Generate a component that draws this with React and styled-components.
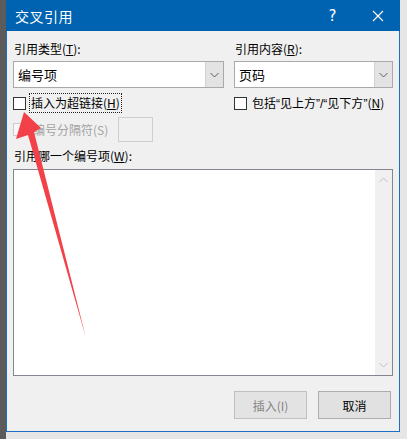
import React from 'react';
import styled, { createGlobalStyle } from 'styled-components';

const GlobalStyle = createGlobalStyle`
  html, body {
    margin: 0;
    padding: 0;
    background: #e4e4e4;
    font-family: "Noto Sans CJK SC", "Microsoft YaHei", sans-serif;
    font-size: 12px;
  }
`;

// screenshot backdrop: dark strip on the left, light shadow right and below
const Page = styled.div`
  position: relative;
  width: 407px;
  height: 439px;
  display: flex;
  align-items: flex-start;
  background: linear-gradient(to right, #5b5b5b 0, #5b5b5b 6px, #e6e6e6 6px);
  overflow: hidden;
`;

const Dialog = styled.div`
  margin-left: 6px;
  width: 394px;
  height: 432px;
  box-sizing: border-box;
  border: 1px solid #1c6ec2;
  border-top: none;
  background: #f0f0f0;
  display: flex;
  flex-direction: column;
`;

const TitleBar = styled.div`
  height: 31px;
  margin: 0 -1px;
  background: #0063b1;
  color: #fff;
  display: flex;
  align-items: center;
  padding-left: 9px;
  font-size: 14px;
`;

const Title = styled.div`
  flex: 1;
  letter-spacing: 0.5px;
`;

const TitleButton = styled.div`
  width: 45px;
  height: 31px;
  display: flex;
  align-items: center;
  justify-content: center;
  font-family: "Segoe UI", "DejaVu Sans", sans-serif;
  font-size: 15px;
`;

const Body = styled.div`
  flex: 1;
  padding: 10px 6px 0 6px;
  display: flex;
  flex-direction: column;
`;

const TopGrid = styled.div`
  display: grid;
  grid-template-columns: 211px 159px;
  column-gap: 10px;
`;

const Column = styled.div`
  display: flex;
  flex-direction: column;
`;

const Label = styled.div`
  height: 16px;
  line-height: 16px;
  padding-left: 1px;
  color: ${p => (p.$disabled ? '#a3a3a3' : '#000')};
  white-space: nowrap;
  u { text-decoration: underline; text-underline-offset: 1px; }
`;

const Combo = styled.div`
  margin-top: 4px;
  height: 27px;
  box-sizing: border-box;
  border: 1px solid #a9a9a9;
  background: #fff;
  display: flex;
`;

const ComboText = styled.div`
  flex: 1;
  padding-left: 4px;
  line-height: 25px;
  font-size: 13px;
`;

const ComboArrow = styled.div`
  width: 17px;
  background: #e3e3e3;
  border-left: 1px solid #d2d2d2;
  display: flex;
  align-items: center;
  justify-content: center;
`;

const CheckRow = styled.div`
  display: flex;
  align-items: center;
  height: ${p => p.$h || 18}px;
  margin-top: ${p => p.$mt || 0}px;
`;

const Box = styled.div`
  width: 13px;
  height: 13px;
  box-sizing: border-box;
  border: 1px solid ${p => (p.$disabled ? '#cccccc' : '#333')};
  background: ${p => (p.$disabled ? '#f7f7f7' : '#fff')};
  flex-shrink: 0;
`;

const CheckLabel = styled.div`
  margin-left: ${p => p.$ml || 3}px;
  padding: 0 1px;
  height: 18px;
  line-height: 18px;
  font-size: 12px;
  color: ${p => (p.$disabled ? '#a3a3a3' : '#000')};
  border: 1px dotted ${p => (p.$focus ? '#222' : 'transparent')};
  white-space: nowrap;
  u { text-decoration: underline; text-underline-offset: 1px; }
`;

// curly quotes drawn narrow, like the Windows UI font
const Quote = styled.span`
  font-family: "Liberation Sans", sans-serif;
`;

const SepInput = styled.div`
  margin-left: 8px;
  width: 35px;
  height: 25px;
  box-sizing: border-box;
  border: 1px solid #cfcfcf;
  background: #f0f0f0;
`;

const ListLabel = styled(Label)`
  margin-top: 6px;
  padding-left: 1px;
`;

const ListBox = styled.div`
  margin-top: 5px;
  height: 207px;
  box-sizing: border-box;
  border: 1px solid #828790;
  background: #fff;
  display: flex;
  justify-content: flex-end;
`;

const ScrollBar = styled.div`
  width: 17px;
  background: #f0f0f0;
  display: flex;
  flex-direction: column;
  justify-content: space-between;
  align-items: center;
  padding: 7px 0;
`;

const Buttons = styled.div`
  margin-top: 15px;
  display: flex;
  justify-content: flex-end;
  gap: 11px;
  padding-right: 2px;
`;

const Button = styled.div`
  width: 73px;
  height: 28px;
  box-sizing: border-box;
  border: 1px solid ${p => (p.$disabled ? '#bfbfbf' : '#adadad')};
  background: ${p => (p.$disabled ? '#e3e3e3' : '#e1e1e1')};
  color: ${p => (p.$disabled ? '#838383' : '#000')};
  display: flex;
  align-items: center;
  justify-content: center;
  font-size: 12px;
`;

const Arrow = styled.svg`
  position: absolute;
  left: 0;
  top: 0;
  pointer-events: none;
`;

const Chevron = ({ up, color = '#5c5c5c' }) => (
  <svg width="9" height="6" viewBox="0 0 9 6">
    <polyline
      points={up ? '0.5,5 4.5,1 8.5,5' : '0.5,1 4.5,5 8.5,1'}
      fill="none"
      stroke={color}
      strokeWidth="1"
    />
  </svg>
);

const App = () => {
  return (
    <Page>
      <GlobalStyle />
      <Dialog>
        <TitleBar>
          <Title>交叉引用</Title>
          <TitleButton>?</TitleButton>
          <TitleButton>
            <svg width="12" height="12" viewBox="0 0 12 12">
              <path d="M1 1 L11 11 M11 1 L1 11" stroke="#fff" strokeWidth="1.2" />
            </svg>
          </TitleButton>
        </TitleBar>
        <Body>
          <TopGrid>
            <Column>
              <Label>引用类型(<u>T</u>):</Label>
              <Combo>
                <ComboText>编号项</ComboText>
                <ComboArrow><Chevron /></ComboArrow>
              </Combo>
              <CheckRow $mt={6}>
                <Box />
                <CheckLabel $focus>插入为超链接(<u>H</u>)</CheckLabel>
              </CheckRow>
              <CheckRow $h={25} $mt={5}>
                <Box $disabled />
                <CheckLabel $disabled $ml={5}>编号分隔符(S)</CheckLabel>
                <SepInput />
              </CheckRow>
            </Column>
            <Column>
              <Label>引用内容(<u>R</u>):</Label>
              <Combo>
                <ComboText>页码</ComboText>
                <ComboArrow><Chevron /></ComboArrow>
              </Combo>
              <CheckRow $mt={6}>
                <Box />
                <CheckLabel>
                  包括<Quote>“</Quote>见上方<Quote>”/“</Quote>见下方<Quote>”</Quote>(<u>N</u>)
                </CheckLabel>
              </CheckRow>
            </Column>
          </TopGrid>
          <ListLabel>引用哪一个编号项(<u>W</u>):</ListLabel>
          <ListBox>
            <ScrollBar>
              <Chevron up color="#bdbdbd" />
              <Chevron color="#bdbdbd" />
            </ScrollBar>
          </ListBox>
          <Buttons>
            <Button $disabled>插入(I)</Button>
            <Button>取消</Button>
          </Buttons>
        </Body>
      </Dialog>
      <Arrow width="407" height="439" viewBox="0 0 407 439">
        <polygon
          points="24,112 41,128 34,132 86,338 28,135 16,139"
          fill="#f3414a"
        />
      </Arrow>
    </Page>
  );
};

export default App;
